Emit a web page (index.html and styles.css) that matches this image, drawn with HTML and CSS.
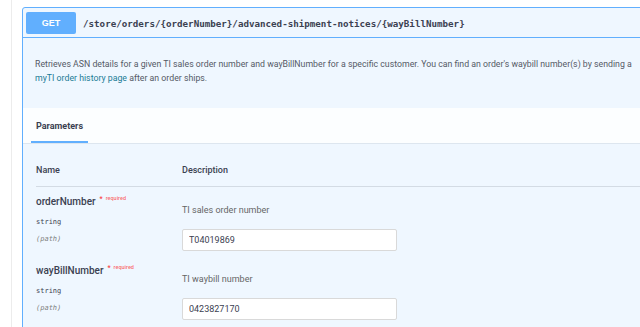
FILE: index.html
```html
<!DOCTYPE html>
<html lang="en">
<head>
    <meta charset="UTF-8">
    <title>Advanced shipment notices</title>
    <link rel="stylesheet" href="styles.css">
</head>
<body>
    <div class="wrapper">
        <div class="opblock">
            <div class="summary">
                <span class="method">GET</span>
                <span class="path">/store/orders/{orderNumber}/advanced-shipment-notices/{wayBillNumber}</span>
            </div>

            <div class="description">
                <p>Retrieves ASN details for a given TI sales order number and wayBillNumber for a specific customer. You can find an order's waybill number(s) by sending a<br><a href="#">myTI order history page</a> after an order ships.</p>
            </div>

            <div class="tab-header">
                <span class="tab">Parameters</span>
            </div>

            <div class="params">
                <div class="param-row head">
                    <div>Name</div>
                    <div>Description</div>
                </div>

                <div class="param-row">
                    <div class="name-col">
                        <div class="param-name">orderNumber<span class="req">*</span><span class="req-label">required</span></div>
                        <div class="param-type">string</div>
                        <div class="param-in">(path)</div>
                    </div>
                    <div class="desc-col">
                        <div class="param-desc">TI sales order number</div>
                        <input class="param-input" type="text" value="T04019869">
                    </div>
                </div>

                <div class="param-row">
                    <div class="name-col">
                        <div class="param-name">wayBillNumber<span class="req">*</span><span class="req-label">required</span></div>
                        <div class="param-type">string</div>
                        <div class="param-in">(path)</div>
                    </div>
                    <div class="desc-col">
                        <div class="param-desc">TI waybill number</div>
                        <input class="param-input" type="text" value="0423827170">
                    </div>
                </div>
            </div>
        </div>
    </div>
</body>
</html>
```

FILE: styles.css
```css
body {
    margin: 0;
    padding: 0;
    background-color: #fff;
    font-family: Roboto, "Liberation Sans", sans-serif;
    color: #3b4151;
    overflow: hidden;
}

.wrapper {
    margin-left: 11px;
    border-left: 1px solid #ececec;
    padding: 7px 0 0 10px;
    height: 340px;
}

.opblock {
    width: 700px;
    border: 1px solid #61affe;
    border-radius: 3px;
    background-color: #eff7ff;
}

.summary {
    display: flex;
    align-items: center;
    padding: 4px 3px 3px;
    border-bottom: 1px solid #61affe;
}

.method {
    width: 50px;
    height: 22px;
    line-height: 22px;
    text-align: center;
    background-color: #61affe;
    color: #fff;
    font-family: "Liberation Sans", Arial, sans-serif;
    font-weight: bold;
    font-size: 9px;
    border-radius: 2px;
}

.path {
    margin-left: 7px;
    font-family: "DejaVu Sans Mono", monospace;
    font-weight: bold;
    font-size: 9.2px;
    color: #3b4151;
}

.description {
    padding: 19px 12px 23px;
}

.description p {
    margin: 0;
    font-size: 8.75px;
    line-height: 14px;
    color: #555a66;
    white-space: nowrap;
}

.description a {
    color: #1c7c96;
    text-decoration: none;
}

.tab-header {
    height: 35px;
    background-color: #fcfeff;
    border-bottom: 1px solid #dde6ef;
    padding-left: 8px;
    display: flex;
}

.tab {
    display: flex;
    align-items: center;
    height: 31px;
    padding: 2px 5px 0;
    font-size: 9px;
    font-weight: bold;
    border-bottom: 2px solid #61affe;
}

.params {
    padding: 19px 0 40px 13px;
}

.param-row {
    display: grid;
    grid-template-columns: 146px 1fr;
    padding: 8px 0 5px;
}

.param-row.head {
    padding: 0 0 9px;
    font-size: 9px;
    font-weight: 500;
    line-height: 14px;
    border-bottom: 1px solid #d3dbe4;
}

.param-name {
    font-size: 10px;
    font-weight: 500;
    line-height: 14px;
    color: #3b4151;
}

.req {
    color: #f93e3e;
    font-size: 7px;
    position: relative;
    top: -4px;
    padding: 0 3px 0 4px;
}

.req-label {
    color: rgba(255, 0, 0, 0.6);
    font-size: 5.5px;
    position: relative;
    top: -5px;
}

.param-type {
    margin-top: 6px;
    font-family: "DejaVu Sans Mono", monospace;
    font-size: 7px;
    line-height: 12px;
    color: #3b4151;
}

.param-in {
    margin-top: 5px;
    font-family: "DejaVu Sans Mono", monospace;
    font-style: italic;
    font-size: 7px;
    line-height: 12px;
    color: #808080;
}

.desc-col {
    display: flex;
    flex-direction: column;
    align-items: flex-start;
}

.param-desc {
    margin-top: 8px;
    font-size: 9px;
    line-height: 14px;
    color: #666;
}

.param-input {
    margin-top: 12px;
    width: 215px;
    height: 22px;
    box-sizing: border-box;
    padding: 0 6px;
    border: 1px solid #d9d9d9;
    border-radius: 2px;
    background-color: #fff;
    font-family: Roboto, "Liberation Sans", sans-serif;
    font-size: 9px;
    color: #3b4151;
}
```
